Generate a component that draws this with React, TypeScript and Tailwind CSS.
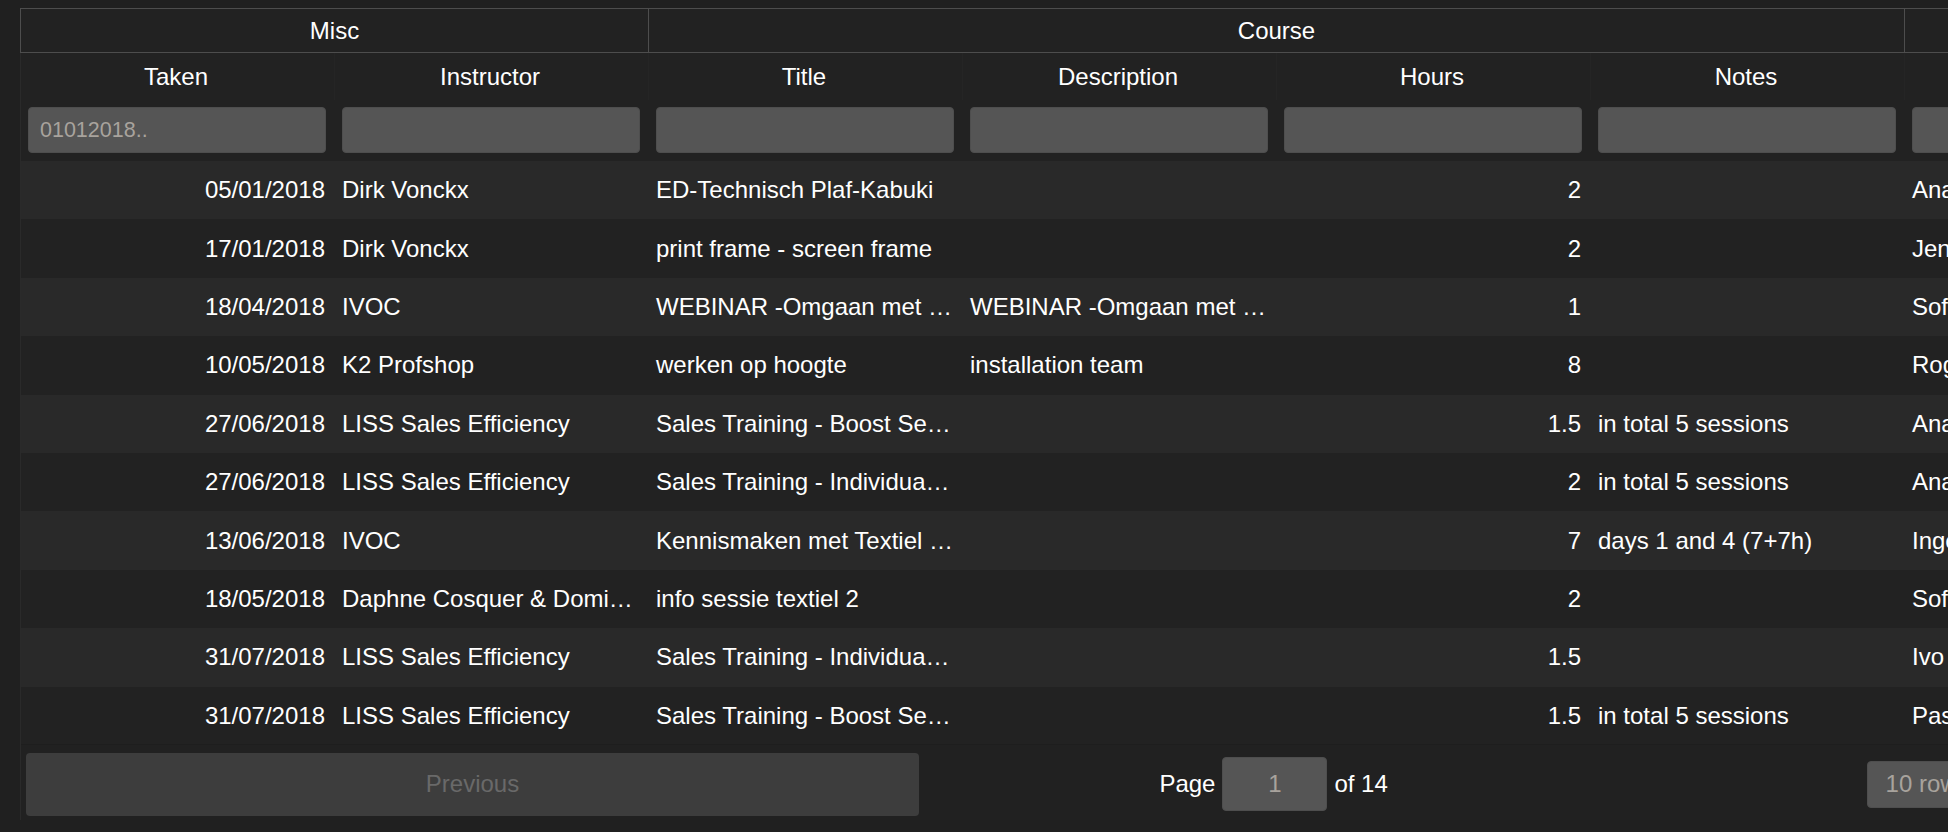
import React from "react";

type Row = {
  taken: string;
  instructor: string;
  title: string;
  description: string;
  hours: string;
  notes: string;
  employee: string;
  department: string;
};

const ROWS: Row[] = [
  { taken: "05/01/2018", instructor: "Dirk Vonckx", title: "ED-Technisch Plaf-Kabuki", description: "", hours: "2", notes: "", employee: "Ana Verhoeven", department: "Sales" },
  { taken: "17/01/2018", instructor: "Dirk Vonckx", title: "print frame - screen frame", description: "", hours: "2", notes: "", employee: "Jente Claes", department: "Production" },
  { taken: "18/04/2018", instructor: "IVOC", title: "WEBINAR -Omgaan met agressie", description: "WEBINAR -Omgaan met agressie", hours: "1", notes: "", employee: "Sofie Maes", department: "Office" },
  { taken: "10/05/2018", instructor: "K2 Profshop", title: "werken op hoogte", description: "installation team", hours: "8", notes: "", employee: "Roger Peeters", department: "Installation" },
  { taken: "27/06/2018", instructor: "LISS Sales Efficiency", title: "Sales Training - Boost Session", description: "", hours: "1.5", notes: "in total 5 sessions", employee: "Ana Verhoeven", department: "Sales" },
  { taken: "27/06/2018", instructor: "LISS Sales Efficiency", title: "Sales Training - Individual coaching", description: "", hours: "2", notes: "in total 5 sessions", employee: "Ana Verhoeven", department: "Sales" },
  { taken: "13/06/2018", instructor: "IVOC", title: "Kennismaken met Textiel en Stoffen", description: "", hours: "7", notes: "days 1 and 4 (7+7h)", employee: "Inge Wouters", department: "Design" },
  { taken: "18/05/2018", instructor: "Daphne Cosquer & Dominique Lambert", title: "info sessie textiel 2", description: "", hours: "2", notes: "", employee: "Sofie Maes", department: "Office" },
  { taken: "31/07/2018", instructor: "LISS Sales Efficiency", title: "Sales Training - Individual coaching", description: "", hours: "1.5", notes: "", employee: "Ivo Jacobs", department: "Sales" },
  { taken: "31/07/2018", instructor: "LISS Sales Efficiency", title: "Sales Training - Boost Session", description: "", hours: "1.5", notes: "in total 5 sessions", employee: "Pascal Dubois", department: "Sales" },
];

const HEADERS = ["Taken", "Instructor", "Title", "Description", "Hours", "Notes", "Employee", "Department", "Location", "Status"];

// filter inputs sit inside each column, a bit tighter on the right
function FilterInput({ placeholder }: { placeholder?: string }) {
  return (
    <div className="w-[314px] shrink-0 pl-[7px] pr-[9px] pt-[7px]">
      <div className="h-[46px] w-full rounded-[4px] border border-[#4e4e4e] bg-[#555555] pl-[11px] flex items-center text-[21.5px] text-[#a8a39d]">
        {placeholder}
      </div>
    </div>
  );
}

function Cell({ children, right }: { children?: React.ReactNode; right?: boolean }) {
  return (
    <div
      className={
        right
          ? "w-[314px] shrink-0 pl-[7px] pr-[10px] truncate text-right"
          : "w-[314px] shrink-0 pl-[7px] pr-[8.5px] truncate text-left"
      }
    >
      {children}
    </div>
  );
}

export default function App() {
  return (
    <div className="w-[1948px] h-[832px] overflow-hidden bg-[#202020] font-['Liberation_Sans',Arial,sans-serif] text-[24px] text-white">
      <div className="ml-[20px] mt-[8px] w-[3142px] bg-[#222222]">
        {/* group headers */}
        <div className="flex h-[45px]">
          <div className="w-[629px] shrink-0 border border-[#4d4d4d] flex items-center justify-center">Misc</div>
          <div className="w-[1256px] shrink-0 border-y border-r border-[#4d4d4d] flex items-center justify-center">Course</div>
          <div className="w-[1257px] shrink-0 border-y border-r border-[#4d4d4d] flex items-center justify-center">Employee</div>
        </div>

        <div className="border-l border-[#2a2a2a]">
          {/* column headers */}
          <div className="flex h-[47px] items-center">
            {HEADERS.map((h) => (
              <div key={h} className="w-[314px] shrink-0 h-full flex items-center justify-center pl-[7px] pr-[10px] border-r border-[#252525]">
                {h}
              </div>
            ))}
          </div>

          {/* filters */}
          <div className="flex h-[61px]">
            {HEADERS.map((h, i) => (
              <FilterInput key={h} placeholder={i === 0 ? "01012018.." : undefined} />
            ))}
          </div>

          {/* body */}
          {ROWS.map((r, i) => (
            <div
              key={i}
              className={i % 2 === 0 ? "flex h-[58.4px] items-center bg-[#292929]" : "flex h-[58.4px] items-center bg-[#222222]"}
            >
              <Cell right>{r.taken}</Cell>
              <Cell>{r.instructor}</Cell>
              <Cell>{r.title}</Cell>
              <Cell>{r.description}</Cell>
              <Cell right>{r.hours}</Cell>
              <Cell>{r.notes}</Cell>
              <Cell>{r.employee}</Cell>
              <Cell>{r.department}</Cell>
              <Cell>Gent</Cell>
              <Cell>Done</Cell>
            </div>
          ))}

          {/* pagination */}
          <div className="flex h-[75px] items-start pt-[8px] pl-[5px] bg-[#212121] shadow-[0_-1px_0_#1e1e1e]">
            <button className="w-[893px] h-[63px] shrink-0 rounded-[4px] bg-[#3d3d3d] text-[#696969] text-[24px]">
              Previous
            </button>
            <div className="ml-[1px] w-[1342px] h-[63px] shrink-0 flex items-center justify-around">
              <div className="flex items-center">
                <span>Page</span>
                <div className="mx-[7px] w-[105px] h-[54px] rounded-[4px] border border-[#4e4e4e] bg-[#555555] flex items-center justify-center text-[24px] text-[#a8a39d]">
                  1
                </div>
                <span>of 14</span>
              </div>
              <div className="w-[156px] h-[47px] rounded-[4px] border border-[#4e4e4e] bg-[#555555] flex items-center pl-[18px] text-[24px] text-[#a8a39d]">
                10 rows
              </div>
            </div>
            <button className="w-[893px] h-[63px] shrink-0 rounded-[4px] bg-[#3d3d3d] text-white text-[24px]">
              Next
            </button>
          </div>
        </div>
      </div>
    </div>
  );
}
